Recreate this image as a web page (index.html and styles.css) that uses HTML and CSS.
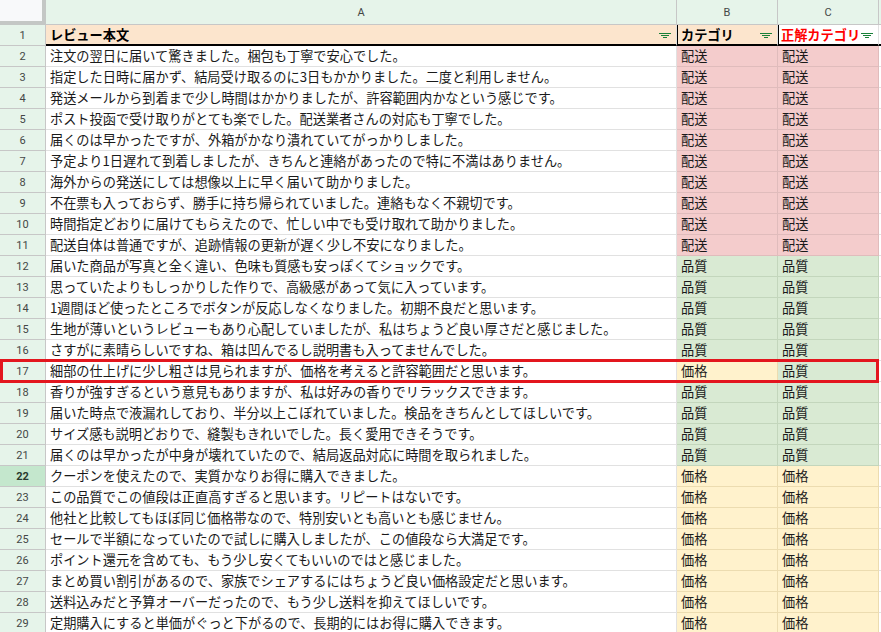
FILE: index.html
```html
<!DOCTYPE html>
<html lang="ja">
<head>
<meta charset="utf-8">
<title>Sheet</title>
<link rel="stylesheet" href="styles.css">
</head>
<body>
<div class="sheet">
  <div class="grid">
    <div class="corner"></div>
    <div class="colhead">A</div>
    <div class="colhead">B</div>
    <div class="colhead">C</div>
    <div class="colhead tail"></div>

    <div class="rownum">1</div>
    <div class="cell hdr peach"><span>レビュー本文</span><svg class="filt" width="12" height="6" viewBox="0 0 12 6" shape-rendering="crispEdges"><path d="M0 0.5h12M2 2.5h8M4 4.5h4" stroke="#188038" stroke-width="1"/></svg></div>
    <div class="cell hdr peach bl"><span>カテゴリ</span><svg class="filt" width="12" height="6" viewBox="0 0 12 6" shape-rendering="crispEdges"><path d="M0 0.5h12M2 2.5h8M4 4.5h4" stroke="#188038" stroke-width="1"/></svg></div>
    <div class="cell hdr white bl red"><span>正解カテゴリ</span><svg class="filt" width="12" height="6" viewBox="0 0 12 6" shape-rendering="crispEdges"><path d="M0 0.5h12M2 2.5h8M4 4.5h4" stroke="#188038" stroke-width="1"/></svg></div>
    <div class="cell hdr tail"></div>

    <div class="rownum">2</div><div class="cell">注文の翌日に届いて驚きました。梱包も丁寧で安心でした。</div><div class="cell pink">配送</div><div class="cell pink">配送</div><div class="cell tail"></div>
    <div class="rownum">3</div><div class="cell">指定した日時に届かず、結局受け取るのに3日もかかりました。二度と利用しません。</div><div class="cell pink">配送</div><div class="cell pink">配送</div><div class="cell tail"></div>
    <div class="rownum">4</div><div class="cell">発送メールから到着まで少し時間はかかりましたが、許容範囲内かなという感じです。</div><div class="cell pink">配送</div><div class="cell pink">配送</div><div class="cell tail"></div>
    <div class="rownum">5</div><div class="cell">ポスト投函で受け取りがとても楽でした。配送業者さんの対応も丁寧でした。</div><div class="cell pink">配送</div><div class="cell pink">配送</div><div class="cell tail"></div>
    <div class="rownum">6</div><div class="cell">届くのは早かったですが、外箱がかなり潰れていてがっかりしました。</div><div class="cell pink">配送</div><div class="cell pink">配送</div><div class="cell tail"></div>
    <div class="rownum">7</div><div class="cell">予定より1日遅れて到着しましたが、きちんと連絡があったので特に不満はありません。</div><div class="cell pink">配送</div><div class="cell pink">配送</div><div class="cell tail"></div>
    <div class="rownum">8</div><div class="cell">海外からの発送にしては想像以上に早く届いて助かりました。</div><div class="cell pink">配送</div><div class="cell pink">配送</div><div class="cell tail"></div>
    <div class="rownum">9</div><div class="cell">不在票も入っておらず、勝手に持ち帰られていました。連絡もなく不親切です。</div><div class="cell pink">配送</div><div class="cell pink">配送</div><div class="cell tail"></div>
    <div class="rownum">10</div><div class="cell">時間指定どおりに届けてもらえたので、忙しい中でも受け取れて助かりました。</div><div class="cell pink">配送</div><div class="cell pink">配送</div><div class="cell tail"></div>
    <div class="rownum">11</div><div class="cell">配送自体は普通ですが、追跡情報の更新が遅く少し不安になりました。</div><div class="cell pink">配送</div><div class="cell pink">配送</div><div class="cell tail"></div>
    <div class="rownum">12</div><div class="cell">届いた商品が写真と全く違い、色味も質感も安っぽくてショックです。</div><div class="cell green">品質</div><div class="cell green">品質</div><div class="cell tail"></div>
    <div class="rownum">13</div><div class="cell">思っていたよりもしっかりした作りで、高級感があって気に入っています。</div><div class="cell green">品質</div><div class="cell green">品質</div><div class="cell tail"></div>
    <div class="rownum">14</div><div class="cell">1週間ほど使ったところでボタンが反応しなくなりました。初期不良だと思います。</div><div class="cell green">品質</div><div class="cell green">品質</div><div class="cell tail"></div>
    <div class="rownum">15</div><div class="cell">生地が薄いというレビューもあり心配していましたが、私はちょうど良い厚さだと感じました。</div><div class="cell green">品質</div><div class="cell green">品質</div><div class="cell tail"></div>
    <div class="rownum">16</div><div class="cell">さすがに素晴らしいですね、箱は凹んでるし説明書も入ってませんでした。</div><div class="cell green">品質</div><div class="cell green">品質</div><div class="cell tail"></div>
    <div class="rownum">17</div><div class="cell">細部の仕上げに少し粗さは見られますが、価格を考えると許容範囲だと思います。</div><div class="cell yellow">価格</div><div class="cell green">品質</div><div class="cell tail"></div>
    <div class="rownum">18</div><div class="cell">香りが強すぎるという意見もありますが、私は好みの香りでリラックスできます。</div><div class="cell green">品質</div><div class="cell green">品質</div><div class="cell tail"></div>
    <div class="rownum">19</div><div class="cell">届いた時点で液漏れしており、半分以上こぼれていました。検品をきちんとしてほしいです。</div><div class="cell green">品質</div><div class="cell green">品質</div><div class="cell tail"></div>
    <div class="rownum">20</div><div class="cell">サイズ感も説明どおりで、縫製もきれいでした。長く愛用できそうです。</div><div class="cell green">品質</div><div class="cell green">品質</div><div class="cell tail"></div>
    <div class="rownum">21</div><div class="cell">届くのは早かったが中身が壊れていたので、結局返品対応に時間を取られました。</div><div class="cell green">品質</div><div class="cell green">品質</div><div class="cell tail"></div>
    <div class="rownum sel">22</div><div class="cell">クーポンを使えたので、実質かなりお得に購入できました。</div><div class="cell yellow">価格</div><div class="cell yellow">価格</div><div class="cell tail"></div>
    <div class="rownum">23</div><div class="cell">この品質でこの値段は正直高すぎると思います。リピートはないです。</div><div class="cell yellow">価格</div><div class="cell yellow">価格</div><div class="cell tail"></div>
    <div class="rownum">24</div><div class="cell">他社と比較してもほぼ同じ価格帯なので、特別安いとも高いとも感じません。</div><div class="cell yellow">価格</div><div class="cell yellow">価格</div><div class="cell tail"></div>
    <div class="rownum">25</div><div class="cell">セールで半額になっていたので試しに購入しましたが、この値段なら大満足です。</div><div class="cell yellow">価格</div><div class="cell yellow">価格</div><div class="cell tail"></div>
    <div class="rownum">26</div><div class="cell">ポイント還元を含めても、もう少し安くてもいいのではと感じました。</div><div class="cell yellow">価格</div><div class="cell yellow">価格</div><div class="cell tail"></div>
    <div class="rownum">27</div><div class="cell">まとめ買い割引があるので、家族でシェアするにはちょうど良い価格設定だと思います。</div><div class="cell yellow">価格</div><div class="cell yellow">価格</div><div class="cell tail"></div>
    <div class="rownum">28</div><div class="cell">送料込みだと予算オーバーだったので、もう少し送料を抑えてほしいです。</div><div class="cell yellow">価格</div><div class="cell yellow">価格</div><div class="cell tail"></div>
    <div class="rownum">29</div><div class="cell">定期購入にすると単価がぐっと下がるので、長期的にはお得に購入できます。</div><div class="cell yellow">価格</div><div class="cell yellow">価格</div><div class="cell tail"></div>
  </div>
  <div class="highlight"></div>
</div>
</body>
</html>
```
FILE: styles.css
```css
html, body {
  margin: 0;
  padding: 0;
  background: #ffffff;
  overflow: hidden;
}
.sheet {
  position: relative;
  width: 881px;
  height: 632px;
  overflow: hidden;
}
.grid {
  display: grid;
  grid-template-columns: 46px 631px 101px 101px 2px;
  grid-template-rows: 25px repeat(29, 21px);
  font-family: "Noto Sans CJK JP", "Noto Sans", sans-serif;
  font-size: 13.2px;
  color: #1a1a1a;
}
.corner {
  background: #f8f9fa;
  border-right: 4px solid #c4c7c5;
  border-bottom: 4px solid #c4c7c5;
  box-sizing: border-box;
}
.colhead {
  background: #e6f4ea;
  border-right: 1px solid #c7c7c7;
  border-bottom: 1px solid #c7c7c7;
  box-sizing: border-box;
  display: flex;
  align-items: center;
  justify-content: center;
  font-family: "Roboto", "Liberation Sans", sans-serif;
  font-size: 11px;
  color: #444746;
}
.rownum {
  background: #e6f4ea;
  border-right: 1px solid #c7c7c7;
  border-bottom: 1px solid #c7c7c7;
  box-sizing: border-box;
  display: flex;
  align-items: center;
  justify-content: center;
  font-family: "Roboto", "Liberation Sans", sans-serif;
  font-size: 11px;
  color: #444746;
}
.rownum.sel {
  background: #c4e7cd;
  font-weight: bold;
  color: #2a3a2e;
}
.cell {
  border-right: 1px solid #e1e1e1;
  border-bottom: 1px solid #e1e1e1;
  box-sizing: border-box;
  padding: 0 3px 0 4px;
  white-space: nowrap;
  overflow: hidden;
  display: flex;
  align-items: center;
  line-height: 20px;
}
.cell.tail {
  border-right: none;
  background: #ffffff;
}
.colhead.tail {
  border-right: none;
  background: #e6f4ea;
}
.hdr {
  font-weight: bold;
  border-bottom: 2px solid #000000;
  color: #000000;
  padding-right: 5px;
  position: relative;
}
.hdr.tail {
  padding: 0;
}
.hdr span {
  flex: 1 1 auto;
  overflow: visible;
}
.filt {
  flex: 0 0 auto;
  align-self: flex-start;
  margin-top: 8px;
  display: block;
}
.peach {
  background: #fce5cd;
}
.white {
  background: #ffffff;
}
.bl {
  border-left: 1px solid #000000;
  padding-left: 3px;
}
.red {
  color: #ff0000;
  padding-left: 2px;
}
.pink {
  background: #f4cccc;
  border-right-color: #e0bcbc;
  border-bottom-color: #e0bcbc;
}
.green {
  background: #d9ead3;
  border-right-color: #c3d6bc;
  border-bottom-color: #c3d6bc;
}
.yellow {
  background: #fff2cc;
  border-right-color: #ecdcb0;
  border-bottom-color: #ecdcb0;
}
.highlight {
  position: absolute;
  left: 0;
  top: 359px;
  width: 879px;
  height: 24px;
  box-sizing: border-box;
  border: 3px solid #e3161e;
  pointer-events: none;
}
```
